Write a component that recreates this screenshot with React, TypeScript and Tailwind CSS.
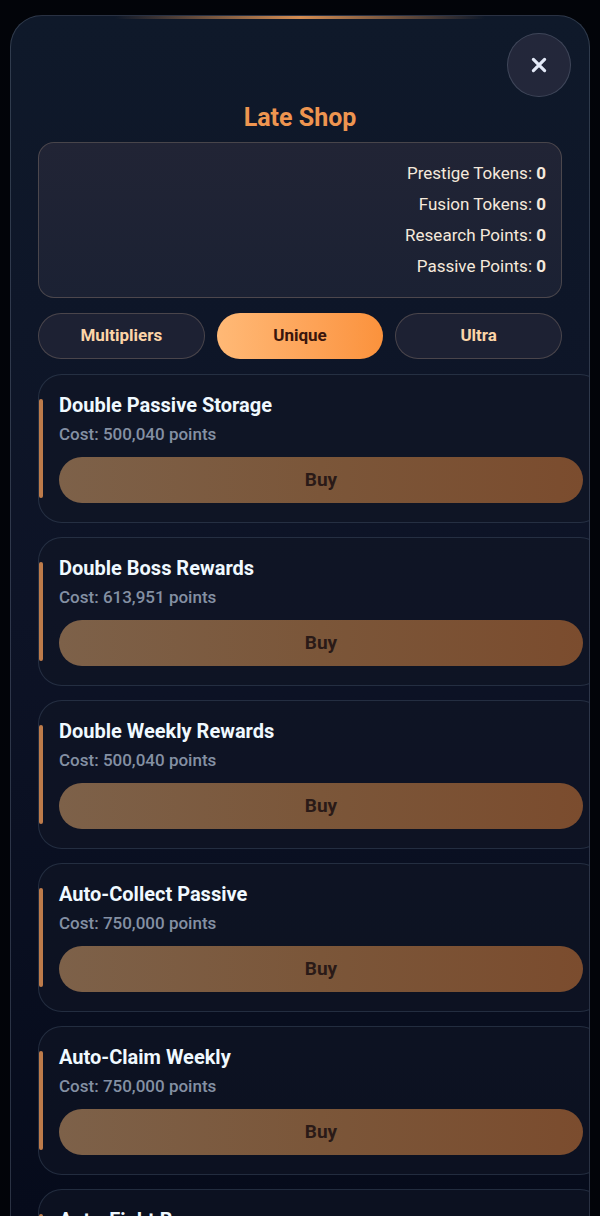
import React, { useState } from 'react';
import clsx from 'clsx';

interface ShopItem {
    name: string;
    cost: number;
}

const BALANCES = [
    { label: 'Prestige Tokens', value: 0 },
    { label: 'Fusion Tokens', value: 0 },
    { label: 'Research Points', value: 0 },
    { label: 'Passive Points', value: 0 },
];

const TABS = ['Multipliers', 'Unique', 'Ultra'];

const ITEMS: ShopItem[] = [
    { name: 'Double Passive Storage', cost: 500040 },
    { name: 'Double Boss Rewards', cost: 613951 },
    { name: 'Double Weekly Rewards', cost: 500040 },
    { name: 'Auto-Collect Passive', cost: 750000 },
    { name: 'Auto-Claim Weekly', cost: 750000 },
    { name: 'Auto-Fight Boss', cost: 750000 },
];

// content-box: the padding comes on top of the full width, so cards run under the panel's right edge
const ShopCard: React.FC<{ item: ShopItem }> = ({ item }) => (
    <li className="relative box-content w-full rounded-3xl border border-[#7f9bb8]/20 bg-[#111525]/60 px-5 pt-[19px] pb-[19px]">
        {/* accent bar on the left edge */}
        <span className="absolute inset-y-6 left-0 w-1 rounded-xs bg-[#bd7b4a]" />
        <h2 className="text-xl leading-[22px] font-bold text-[#f0f9ff]">{item.name}</h2>
        <p className="mt-2 text-[17px] leading-5 font-medium text-[#8490a3]">
            Cost: {item.cost.toLocaleString('en-US')} points
        </p>
        <button
            disabled
            className="mt-[13px] block h-[46px] w-full rounded-full bg-linear-to-r from-[#7d6149] via-[#7b5639] to-[#7b4c2e] text-[19px] font-bold text-[#2a1a17]"
        >
            Buy
        </button>
    </li>
);

export default function App() {
    const [activeTab, setActiveTab] = useState('Unique');

    return (
        <main className="h-screen overflow-hidden bg-[#020409] px-[10px] pt-[15px] font-['Roboto',sans-serif]">
            <section className="relative h-full overflow-hidden rounded-t-[32px] border border-b-0 border-[#94a3b8]/25 bg-linear-to-b from-[#0f192a] via-[#0d1326] to-[#060b1b]">
                {/* glow along the top edge */}
                <div className="absolute inset-x-[18%] top-0 h-[3px] bg-linear-to-r from-transparent via-[#d58d52] to-transparent" />

                <header>
                    <div className="flex justify-end px-[18px] pt-[17px]">
                        <button
                            aria-label="Close"
                            className="flex size-16 items-center justify-center rounded-full border border-[#94a3b8]/25 bg-[#23273a] text-[#e3e9f7]"
                        >
                            <svg viewBox="0 0 16 16" className="size-4" fill="none" stroke="currentColor" strokeWidth="3.2" strokeLinecap="round">
                                <path d="M2.4 2.4 13.6 13.6M13.6 2.4 2.4 13.6" />
                            </svg>
                        </button>
                    </div>
                    <h1 className="mt-[5px] text-center text-[25px] leading-8 font-bold text-[#ee9550]">Late Shop</h1>
                </header>

                <div className="mt-2 flex flex-col gap-[15px] px-[27px]">
                    <div className="rounded-2xl border border-[#ffd9b0]/20 bg-linear-to-b from-[#212435] to-[#1b2133] p-[15px] text-right text-[17px] leading-[31px] text-[#f5e9dc]">
                        {BALANCES.map((b) => (
                            <p key={b.label}>
                                {b.label}: <strong>{b.value}</strong>
                            </p>
                        ))}
                    </div>

                    <nav className="grid grid-cols-3 gap-3">
                        {TABS.map((tab) => (
                            <button
                                key={tab}
                                onClick={() => setActiveTab(tab)}
                                className={clsx(
                                    'h-[46px] rounded-full text-[17px] font-bold',
                                    tab === activeTab
                                        ? 'bg-linear-to-r from-[#ffb976] to-[#fb923c] text-[#3a160c]'
                                        : 'border border-[#ffd9b0]/20 bg-[#1d2133] text-[#fcd5a8]'
                                )}
                            >
                                {tab}
                            </button>
                        ))}
                    </nav>

                    <ul className="flex flex-col gap-[14px]">
                        {ITEMS.map((item) => (
                            <ShopCard key={item.name} item={item} />
                        ))}
                    </ul>
                </div>
            </section>
        </main>
    );
}
